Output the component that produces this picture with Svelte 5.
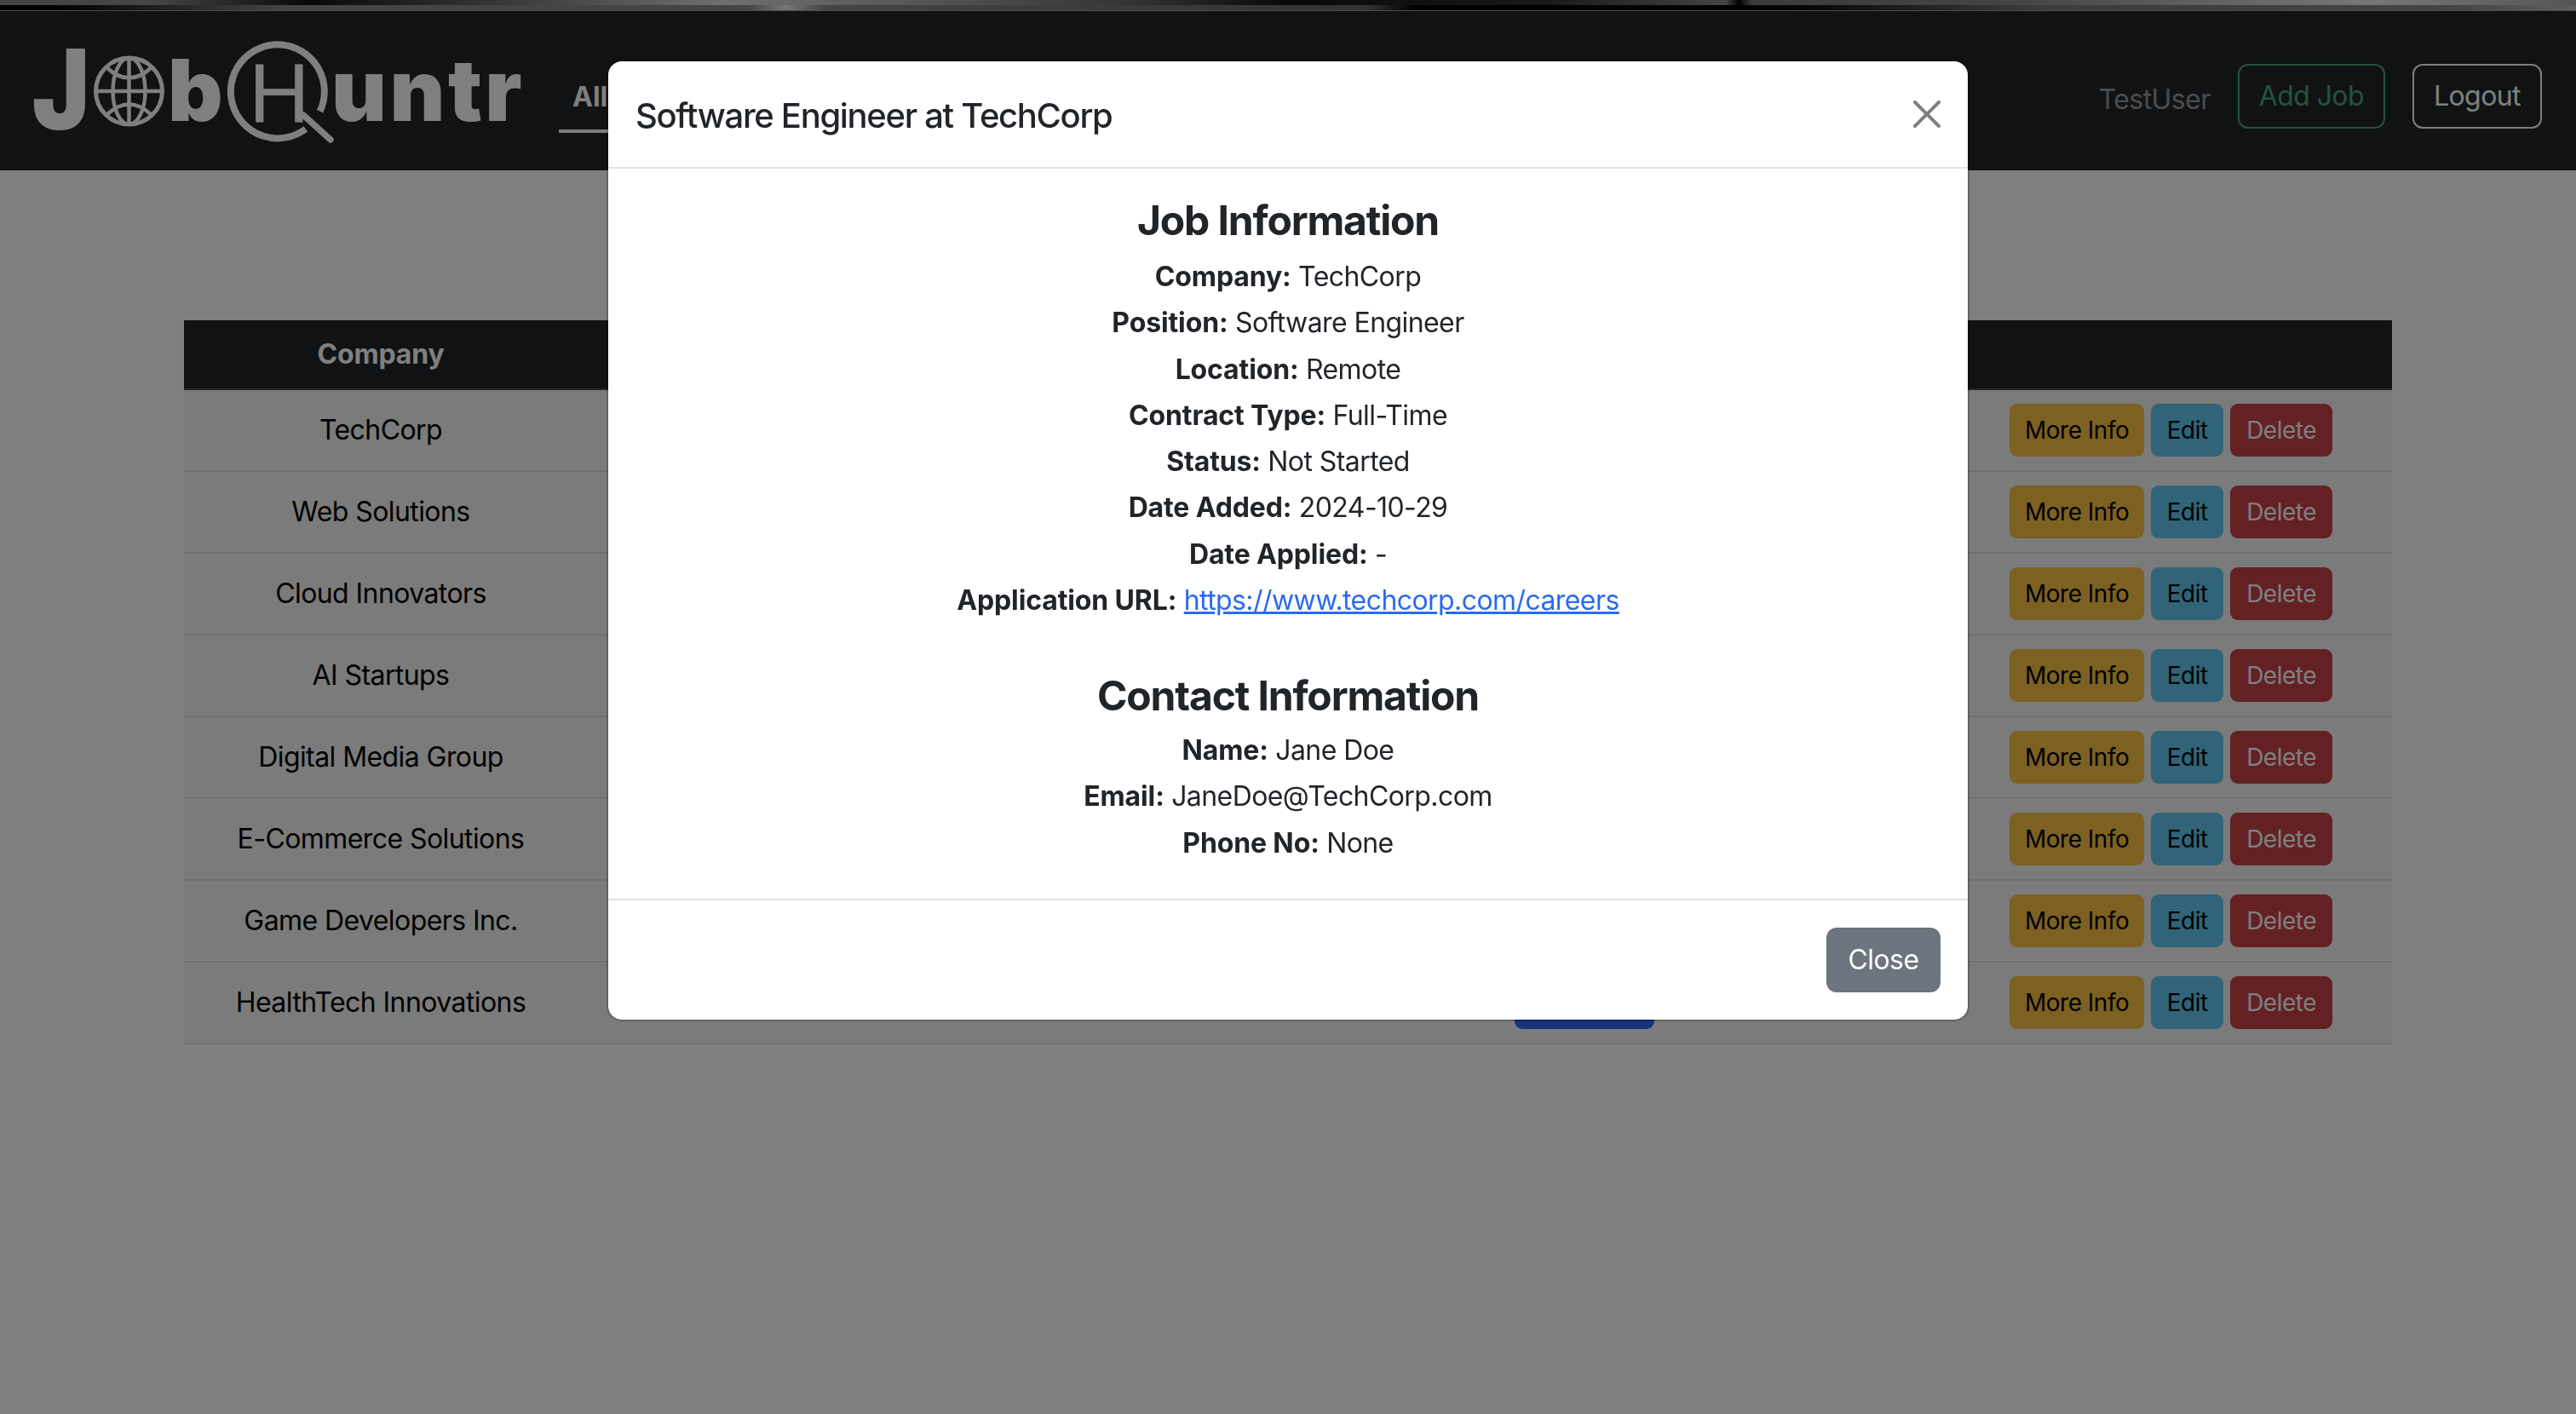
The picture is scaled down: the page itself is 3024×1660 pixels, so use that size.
<script>
	const companies = [
		'TechCorp',
		'Web Solutions',
		'Cloud Innovators',
		'AI Startups',
		'Digital Media Group',
		'E-Commerce Solutions',
		'Game Developers Inc.',
		'HealthTech Innovations'
	];

	const jobInfo = [
		['Company', 'TechCorp'],
		['Position', 'Software Engineer'],
		['Location', 'Remote'],
		['Contract Type', 'Full-Time'],
		['Status', 'Not Started'],
		['Date Added', '2024-10-29'],
		['Date Applied', '-']
	];

	const contactInfo = [
		['Name', 'Jane Doe'],
		['Email', 'JaneDoe@TechCorp.com'],
		['Phone No', 'None']
	];
</script>

<div class="strip"></div>

<nav class="navbar">
	<svg class="logo" viewBox="30 20 590 174" width="590" height="174" aria-label="JobHuntr">
		<text class="heavy" transform="translate(37.700 152) scale(0.87 1)" font-size="130">J</text>
		<g fill="none" stroke="#fff" stroke-width="4.5">
			<circle cx="151.5" cy="107" r="39" stroke-width="5" />
			<ellipse cx="151.5" cy="107" rx="19" ry="39" />
			<path d="M151.5 68v78M112 107h79M125 79q26.500 25 53 0M125 135q26.500-25 53 0" />
		</g>
		<text class="heavy" x="197" y="142" font-size="100">b</text>
		<path
			d="M375.600 130.800A55 55 0 1 0 358.800 151.400"
			fill="none"
			stroke="#fff"
			stroke-width="8"
		/>
		<text class="thin" x="292" y="143" font-size="99">H</text>
		<path d="M356 135 388 164" fill="none" stroke="#fff" stroke-width="7.500" stroke-linecap="round" />
		<path d="M346 139 355 135 355 144z" fill="#fff" />
		<text class="heavy untr" x="389" y="142" font-size="100">untr</text>
	</svg>
	<a class="tab" href="#all">All</a>
	<div class="nav-right">
		<span class="user">TestUser</span>
		<button class="outline green">Add Job</button>
		<button class="outline light">Logout</button>
	</div>
</nav>

<main>
	<table>
		<thead>
			<tr>
				<th class="c-company">Company</th>
				<th class="c-middle"></th>
				<th class="c-actions"></th>
			</tr>
		</thead>
		<tbody>
			{#each companies as company}
				<tr>
					<td>{company}</td>
					<td class="middle"><button class="btn blue" aria-label="Open"></button></td>
					<td>
						<div class="actions">
							<button class="btn yellow">More Info</button>
							<button class="btn cyan">Edit</button>
							<button class="btn red">Delete</button>
						</div>
					</td>
				</tr>
			{/each}
		</tbody>
	</table>
</main>

<div class="backdrop">
	<div class="modal">
		<header class="modal-header">
			<h5>Software Engineer at TechCorp</h5>
			<button class="close" aria-label="Close">
				<svg viewBox="0 0 16 16" width="32" height="32">
					<path
						fill="#808080"
						d="M.293.293a1 1 0 0 1 1.414 0L8 6.586 14.293.293a1 1 0 1 1 1.414 1.414L9.414 8l6.293 6.293a1 1 0 0 1-1.414 1.414L8 9.414l-6.293 6.293a1 1 0 0 1-1.414-1.414L6.586 8 .293 1.707a1 1 0 0 1 0-1.414z"
					/>
				</svg>
			</button>
		</header>
		<div class="modal-body">
			<h4>Job Information</h4>
			{#each jobInfo as [label, value]}
				<p><strong>{label}:</strong> {value}</p>
			{/each}
			<p><strong>Application URL:</strong> <a href="#url">https://www.techcorp.com/careers</a></p>
			<h4 class="second">Contact Information</h4>
			{#each contactInfo as [label, value]}
				<p><strong>{label}:</strong> {value}</p>
			{/each}
		</div>
		<footer class="modal-footer">
			<button class="btn-close">Close</button>
		</footer>
	</div>
</div>

<style>
	:global(body) {
		background: #fff;
		font-family: Inter, 'Noto Sans', sans-serif;
		font-size: 32px;
		line-height: 1.5;
		letter-spacing: -0.018em;
		color: #212529;
		min-height: 1660px;
		overflow: hidden;
	}

	button {
		font-family: inherit;
		letter-spacing: -0.018em;
		cursor: pointer;
	}

	.strip {
		height: 12px;
		background:
			linear-gradient(
					90deg,
					#8a8a8a 0,
					#8a8a8a 6%,
					#111 12%,
					#aaa 24%,
					#ddd 28%,
					#aaa 36%,
					#666 44%,
					#111 50%,
					#333 60%,
					#888 67%,
					#000 67.5%,
					#777 68%,
					#888 78%,
					#eee 92%,
					#aaa 100%
				)
				0 0 / 100% 50% no-repeat,
			linear-gradient(
					90deg,
					#000 0,
					#000 2%,
					#888 11%,
					#888 29%,
					#eee 30.500%,
					#888 32%,
					#666 53%,
					#000 55%,
					#000 69%,
					#777 79%,
					#888 95%,
					#bbb 100%
				)
				0 100% / 100% 50% no-repeat;
		border-bottom: 1px solid #999;
		box-sizing: content-box;
	}

	.navbar {
		height: 187px;
		background: #212529;
		display: flex;
		align-items: center;
		padding: 0 40px 0 30px;
		box-sizing: border-box;
	}

	.logo {
		display: block;
		flex: none;
	}

	.heavy {
		font-family: Inter, sans-serif;
		font-weight: 900;
		letter-spacing: 0;
		fill: #fff;
	}

	.untr {
		letter-spacing: 3.500px;
	}

	.thin {
		font-family: 'Liberation Sans', sans-serif;
		letter-spacing: 0;
		fill: #fff;
	}

	.tab {
		margin-left: 36px;
		margin-top: 20px;
		padding: 12px 16px 14px;
		color: #fff;
		font-weight: 700;
		letter-spacing: 0;
		line-height: 48px;
		text-decoration: none;
		border-bottom: 4px solid #fff;
	}

	.nav-right {
		margin-left: auto;
		margin-top: 12px;
		display: flex;
		align-items: center;
		gap: 32px;
	}

	.user {
		padding-top: 8px;
		color: rgba(255, 255, 255, 0.55);
	}

	.outline {
		height: 76px;
		padding: 0 23px;
		background: transparent;
		border: 2px solid;
		border-radius: 12px;
		font-size: 32px;
	}

	.green {
		color: #4aa677;
		border-color: #4aa677;
	}

	.light {
		color: #fff;
		border-color: #fff;
	}

	main {
		padding: 176px 216px 0;
	}

	table {
		width: 100%;
		border-collapse: separate;
		border-spacing: 0;
		table-layout: fixed;
	}

	th {
		height: 80px;
		background: #212529;
		color: #fff;
		font-weight: 700;
		letter-spacing: -0.005em;
		padding: 0 16px;
		box-sizing: content-box;
		border-bottom: 2px solid #4a4a4a;
	}

	th.c-company,
	th.c-actions {
		box-sizing: border-box;
	}

	.c-company {
		width: 462px;
	}

	.c-actions {
		width: 465px;
	}

	td {
		height: 94px;
		padding: 0 16px;
		text-align: center;
		background: #f6f6f6;
		color: #000;
		border-bottom: 2px solid #e2e2e2;
	}

	.middle {
		padding-left: 1100px;
		text-align: left;
	}

	.actions {
		display: flex;
		gap: 8px;
	}

	.btn {
		height: 62px;
		padding: 0 18px;
		border: none;
		border-radius: 9px;
		font-size: 28px;
		vertical-align: middle;
	}

	.blue {
		width: 164px;
		background: #2e68f4;
	}

	.yellow {
		background: #f8c244;
		color: #000;
	}

	.cyan {
		padding: 0 18.500px;
		background: #62c8f0;
		color: #000;
	}

	.red {
		padding: 0 19px;
		background: #c64248;
		color: #fff;
	}

	.backdrop {
		position: fixed;
		inset: 0;
		background: rgba(0, 0, 0, 0.5);
		display: flex;
		justify-content: center;
		align-items: flex-start;
		padding-top: 72px;
		box-sizing: border-box;
	}

	.modal {
		width: 1596px;
		background: #fff;
		border-radius: 16px;
		box-shadow: 0 0 0 2px rgba(0, 0, 0, 0.2);
		overflow: hidden;
	}

	.modal-header {
		display: flex;
		align-items: center;
		justify-content: space-between;
		height: 126px;
		padding: 0 32px;
		box-sizing: border-box;
		border-bottom: 2px solid #dee2e6;
	}

	h5 {
		margin: 0;
		padding-top: 3px;
		font-size: 40px;
		font-weight: 500;
		letter-spacing: -0.033em;
		line-height: 60px;
	}

	.close {
		padding: 0;
		border: none;
		background: none;
		display: flex;
	}

	.modal-body {
		padding: 32px 32px 35px;
		text-align: center;
	}

	h4 {
		margin: 0 0 13px;
		font-size: 48px;
		font-weight: 700;
		letter-spacing: -0.024em;
		line-height: 58px;
	}

	h4.second {
		margin-top: 59px;
		margin-bottom: 11px;
	}

	p {
		margin: 0 0 6.300px;
		line-height: 48px;
	}

	strong {
		font-weight: 700;
		letter-spacing: -0.004em;
	}

	a {
		color: #2b6af0;
	}

	.modal-body a {
		text-decoration: underline;
	}

	.modal-footer {
		display: flex;
		justify-content: flex-end;
		padding: 32px;
		border-top: 2px solid #dee2e6;
	}

	.btn-close {
		width: 134px;
		height: 76px;
		background: #6c757d;
		color: #fff;
		border: none;
		border-radius: 12px;
		font-size: 32px;
	}
</style>
